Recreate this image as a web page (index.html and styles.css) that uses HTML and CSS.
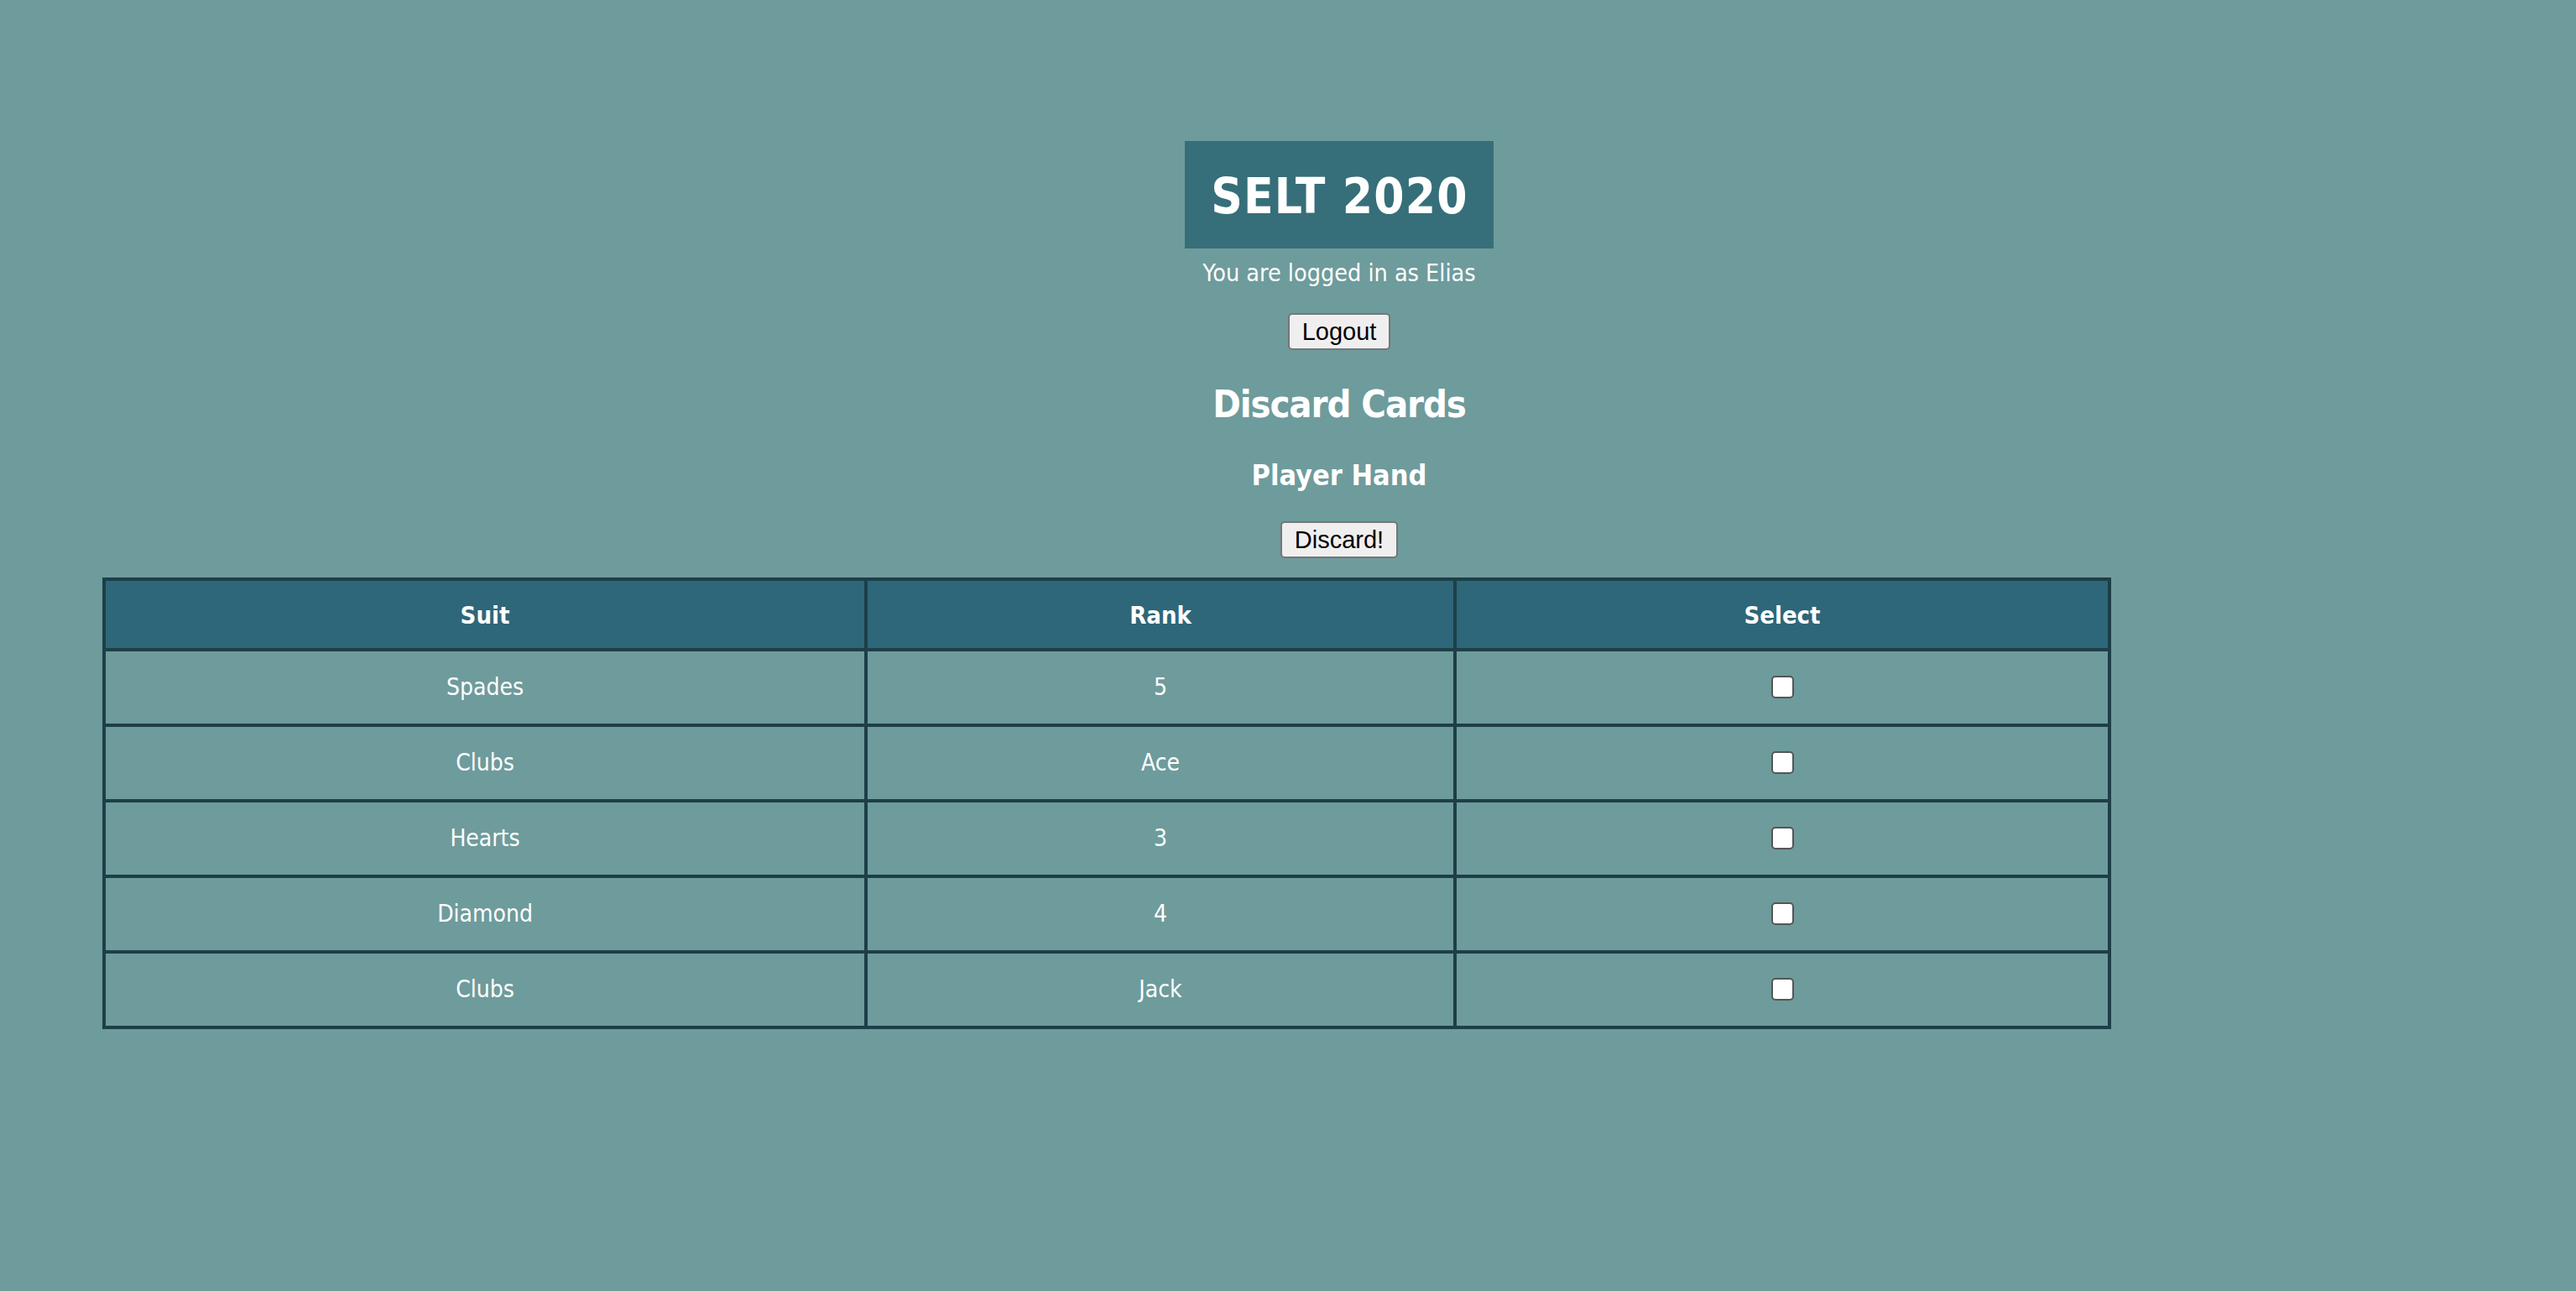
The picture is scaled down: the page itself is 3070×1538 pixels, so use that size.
FILE: index.html
```html
<!DOCTYPE html>
<html lang="en">
<head>
<meta charset="utf-8">
<title>SELT 2020</title>
<link rel="stylesheet" href="styles.css">
</head>
<body>
<div class="top">
  <h1 class="brand">SELT 2020</h1>
  <p class="login">You are logged in as Elias</p>
  <button class="btn btn-logout" type="button">Logout</button>
  <h2 class="title">Discard Cards</h2>
  <h3 class="subtitle">Player Hand</h3>
  <button class="btn btn-discard" type="button">Discard!</button>
</div>
<table class="hand">
  <thead>
    <tr><th class="c-suit">Suit</th><th class="c-rank">Rank</th><th class="c-select">Select</th></tr>
  </thead>
  <tbody>
    <tr><td>Spades</td><td>5</td><td><input class="check" type="checkbox"></td></tr>
    <tr><td>Clubs</td><td>Ace</td><td><input class="check" type="checkbox"></td></tr>
    <tr><td>Hearts</td><td>3</td><td><input class="check" type="checkbox"></td></tr>
    <tr><td>Diamond</td><td>4</td><td><input class="check" type="checkbox"></td></tr>
    <tr><td>Clubs</td><td>Jack</td><td><input class="check" type="checkbox"></td></tr>
  </tbody>
</table>
</body>
</html>
```
FILE: styles.css
```css
html, body {
  background: #6e9b9c;
}
body {
  margin: 0;
  padding: 168px 0 0 122px;
  color: #ffffff;
  font-family: "DejaVu Sans Condensed", "DejaVu Sans", sans-serif;
  font-size: 28px;
}
.top {
  display: flex;
  flex-direction: column;
  align-items: center;
}
.brand {
  margin: 0;
  background: #366f79;
  font-size: 58px;
  font-weight: bold;
  letter-spacing: 1.2px;
  line-height: 124px;
  padding: 4px 30px 0 31px;
}
.login {
  margin: 13px 0 0;
  line-height: 34px;
  font-size: 28.5px;
}
.btn {
  box-sizing: border-box;
  height: 44px;
  padding: 0 15px;
  background: #efefef;
  color: #000000;
  border: 2px solid #767676;
  border-radius: 5px;
  font-family: "Liberation Sans", Arial, sans-serif;
  font-size: 29px;
  line-height: 40px;
}
.btn-logout {
  margin-top: 30px;
}
.title {
  margin: 38px 0 0;
  font-size: 45px;
  letter-spacing: -1.1px;
  line-height: 54px;
  font-weight: bold;
}
.subtitle {
  margin: 37px 0 0;
  font-size: 34px;
  line-height: 40px;
  font-weight: bold;
}
.btn-discard {
  margin-top: 35px;
}
.hand {
  margin-top: 23px;
  border-collapse: separate;
  border-spacing: 0;
  border: 4px solid #1d3f47;
  table-layout: fixed;
  width: 2394px;
}
.hand th, .hand td {
  padding: 0;
  text-align: center;
  border-right: 4px solid #1d3f47;
  border-bottom: 4px solid #1d3f47;
}
.hand th:last-child, .hand td:last-child {
  border-right: 0;
}
.hand tbody tr:last-child td {
  border-bottom: 0;
}
.hand th {
  background: #2d6779;
  font-size: 29px;
  font-weight: bold;
  line-height: 77px;
  padding-top: 3px;
}
.hand td {
  line-height: 86px;
  font-size: 28px;
}
.c-suit { width: 904px; }
.c-rank { width: 698px; }
.c-select { width: 776px; }
.check {
  appearance: none;
  -webkit-appearance: none;
  box-sizing: border-box;
  width: 27px;
  height: 27px;
  margin: 0 0 4px 1px;
  background: #ffffff;
  border: 2px solid #555555;
  border-radius: 5px;
  vertical-align: middle;
}
```
